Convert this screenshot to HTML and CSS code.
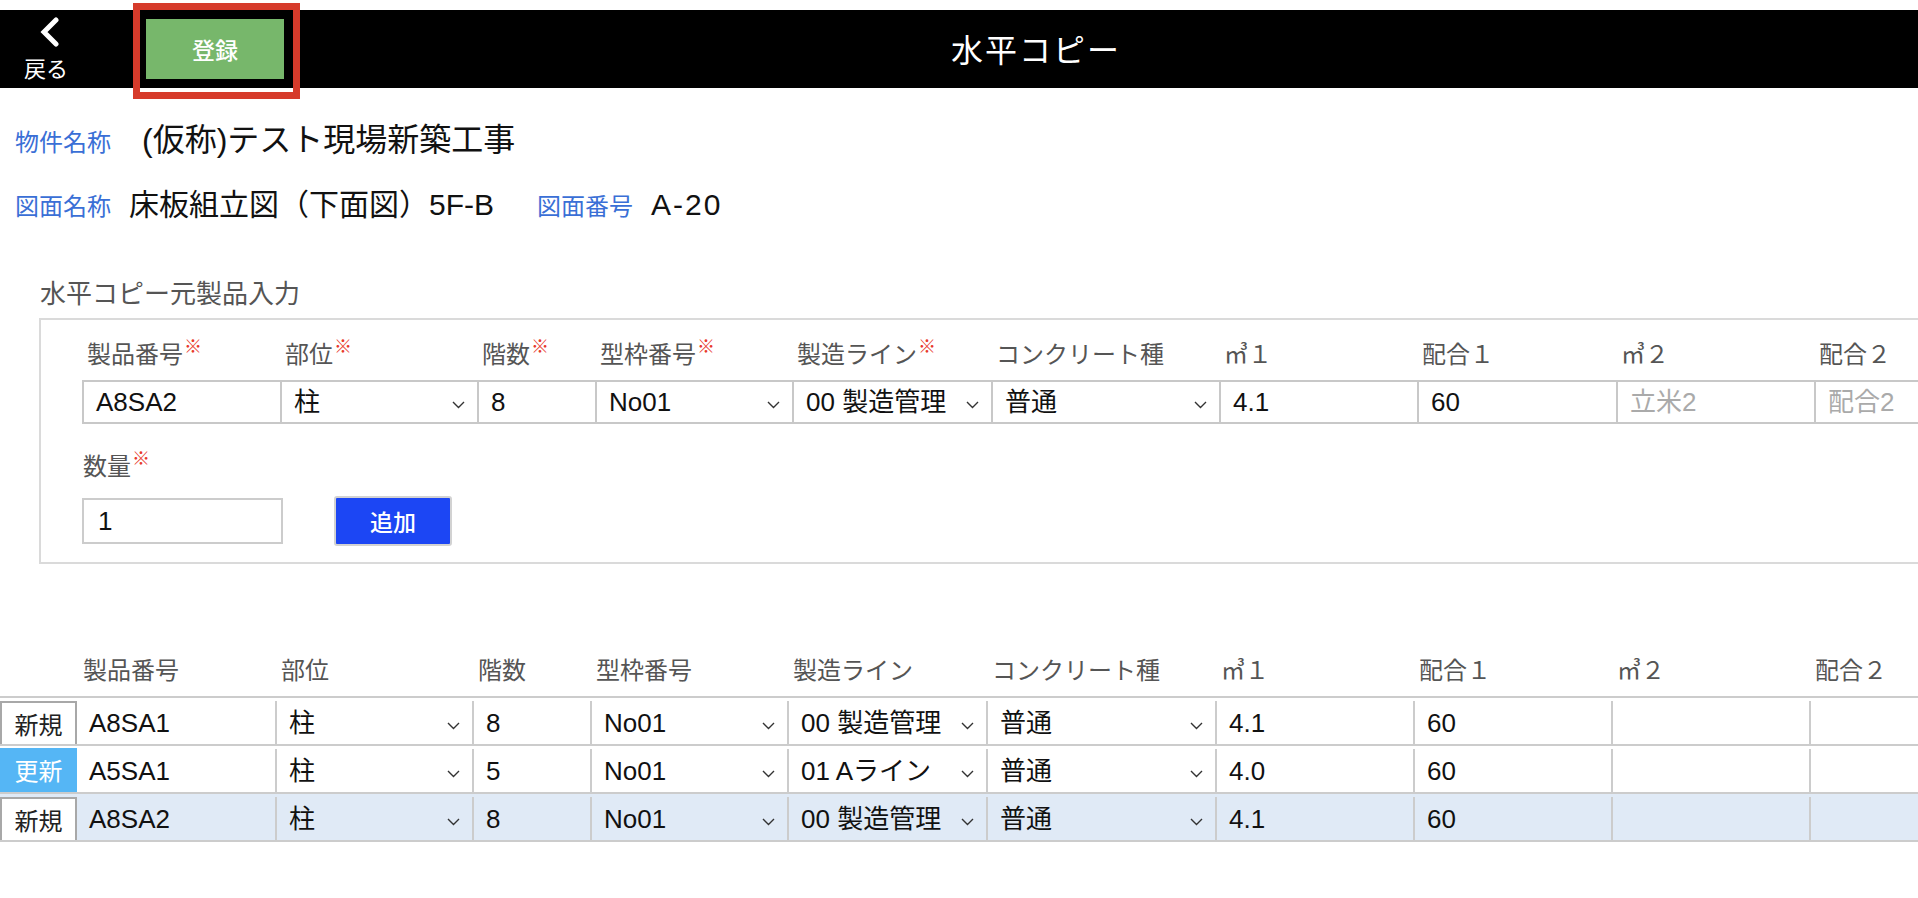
FILE: index.html
```html
<!DOCTYPE html>
<html lang="ja">
<head>
<meta charset="utf-8">
<title>水平コピー</title>
<link rel="stylesheet" href="styles.css">
</head>
<body>
<header class="topbar">
  <div class="back">
    <svg class="back-chev" viewBox="0 0 22 30"><polyline points="17,3 5,15 17,27" fill="none" stroke="#fff" stroke-width="5" stroke-linecap="round" stroke-linejoin="miter"/></svg>
    <span class="back-label">戻る</span>
  </div>
  <div class="save-wrap">
    <button class="save">登録</button>
    <span class="highlight"></span>
  </div>
  <h1 class="title">水平コピー</h1>
</header>

<section class="info">
  <div class="info-row">
    <span class="info-label">物件名称</span>
    <span class="info-value project">(仮称)テスト現場新築工事</span>
  </div>
  <div class="info-row">
    <span class="info-label">図面名称</span>
    <span class="info-value">床板組立図（下面図）5F-B</span>
    <span class="info-label after">図面番号</span>
    <span class="info-value drawing-no">A-20</span>
  </div>
</section>

<section class="source">
  <h2 class="source-title">水平コピー元製品入力</h2>
  <div class="source-box">
    <div class="cols head-row">
      <span class="head-cell">製品番号<span class="req">※</span></span>
      <span class="head-cell">部位<span class="req">※</span></span>
      <span class="head-cell">階数<span class="req">※</span></span>
      <span class="head-cell">型枠番号<span class="req">※</span></span>
      <span class="head-cell">製造ライン<span class="req">※</span></span>
      <span class="head-cell">コンクリート種</span>
      <span class="head-cell">㎥１</span>
      <span class="head-cell">配合１</span>
      <span class="head-cell">㎥２</span>
      <span class="head-cell">配合２</span>
    </div>
    <div class="cols field-row">
      <div class="field">A8SA2</div>
      <div class="field">柱<svg class="chev" viewBox="0 0 13 8"><path d="M1 1L6.5 6.5L12 1" fill="none" stroke="#333" stroke-width="1.4"/></svg></div>
      <div class="field">8</div>
      <div class="field">No01<svg class="chev" viewBox="0 0 13 8"><path d="M1 1L6.5 6.5L12 1" fill="none" stroke="#333" stroke-width="1.4"/></svg></div>
      <div class="field">00 製造管理<svg class="chev" viewBox="0 0 13 8"><path d="M1 1L6.5 6.5L12 1" fill="none" stroke="#333" stroke-width="1.4"/></svg></div>
      <div class="field">普通<svg class="chev" viewBox="0 0 13 8"><path d="M1 1L6.5 6.5L12 1" fill="none" stroke="#333" stroke-width="1.4"/></svg></div>
      <div class="field">4.1</div>
      <div class="field">60</div>
      <div class="field placeholder">立米2</div>
      <div class="field placeholder">配合2</div>
    </div>
    <div class="qty-label">数量<span class="req">※</span></div>
    <div class="qty-row">
      <div class="qty-input">1</div>
      <button class="add-btn">追加</button>
    </div>
  </div>
</section>

<section class="list">
  <div class="list-cols list-head">
    <span></span>
    <span>製品番号</span>
    <span>部位</span>
    <span>階数</span>
    <span>型枠番号</span>
    <span>製造ライン</span>
    <span>コンクリート種</span>
    <span>㎥１</span>
    <span>配合１</span>
    <span>㎥２</span>
    <span>配合２</span>
  </div>
  <div class="list-body">
    <div class="list-cols row">
      <div class="status">新規</div>
      <div class="cell first">A8SA1</div>
      <div class="cell">柱<svg class="chev" viewBox="0 0 13 8"><path d="M1 1L6.5 6.5L12 1" fill="none" stroke="#333" stroke-width="1.4"/></svg></div>
      <div class="cell">8</div>
      <div class="cell">No01<svg class="chev" viewBox="0 0 13 8"><path d="M1 1L6.5 6.5L12 1" fill="none" stroke="#333" stroke-width="1.4"/></svg></div>
      <div class="cell">00 製造管理<svg class="chev" viewBox="0 0 13 8"><path d="M1 1L6.5 6.5L12 1" fill="none" stroke="#333" stroke-width="1.4"/></svg></div>
      <div class="cell">普通<svg class="chev" viewBox="0 0 13 8"><path d="M1 1L6.5 6.5L12 1" fill="none" stroke="#333" stroke-width="1.4"/></svg></div>
      <div class="cell">4.1</div>
      <div class="cell">60</div>
      <div class="cell"></div>
      <div class="cell"></div>
    </div>
    <div class="list-cols row">
      <div class="status update">更新</div>
      <div class="cell first">A5SA1</div>
      <div class="cell">柱<svg class="chev" viewBox="0 0 13 8"><path d="M1 1L6.5 6.5L12 1" fill="none" stroke="#333" stroke-width="1.4"/></svg></div>
      <div class="cell">5</div>
      <div class="cell">No01<svg class="chev" viewBox="0 0 13 8"><path d="M1 1L6.5 6.5L12 1" fill="none" stroke="#333" stroke-width="1.4"/></svg></div>
      <div class="cell">01 Aライン<svg class="chev" viewBox="0 0 13 8"><path d="M1 1L6.5 6.5L12 1" fill="none" stroke="#333" stroke-width="1.4"/></svg></div>
      <div class="cell">普通<svg class="chev" viewBox="0 0 13 8"><path d="M1 1L6.5 6.5L12 1" fill="none" stroke="#333" stroke-width="1.4"/></svg></div>
      <div class="cell">4.0</div>
      <div class="cell">60</div>
      <div class="cell"></div>
      <div class="cell"></div>
    </div>
    <div class="list-cols row sel">
      <div class="status">新規</div>
      <div class="cell first">A8SA2</div>
      <div class="cell">柱<svg class="chev" viewBox="0 0 13 8"><path d="M1 1L6.5 6.5L12 1" fill="none" stroke="#333" stroke-width="1.4"/></svg></div>
      <div class="cell">8</div>
      <div class="cell">No01<svg class="chev" viewBox="0 0 13 8"><path d="M1 1L6.5 6.5L12 1" fill="none" stroke="#333" stroke-width="1.4"/></svg></div>
      <div class="cell">00 製造管理<svg class="chev" viewBox="0 0 13 8"><path d="M1 1L6.5 6.5L12 1" fill="none" stroke="#333" stroke-width="1.4"/></svg></div>
      <div class="cell">普通<svg class="chev" viewBox="0 0 13 8"><path d="M1 1L6.5 6.5L12 1" fill="none" stroke="#333" stroke-width="1.4"/></svg></div>
      <div class="cell">4.1</div>
      <div class="cell">60</div>
      <div class="cell"></div>
      <div class="cell"></div>
    </div>
  </div>
</section>
</body>
</html>
```

FILE: styles.css
```css
* { box-sizing: border-box; }

html, body { margin: 0; padding: 0; }

body {
  width: 1918px;
  height: 898px;
  padding-top: 10px;
  overflow: hidden;
  background: #fff;
  color: #111;
  font-family: "Liberation Sans", "Noto Sans CJK JP", sans-serif;
}

/* ---------- top bar ---------- */
.topbar {
  display: flex;
  align-items: center;
  height: 78px;
  background: #000;
  color: #fff;
}

.back {
  width: 92px;
  height: 100%;
  display: flex;
  flex-direction: column;
  align-items: center;
  justify-content: center;
  gap: 8px;
  padding-bottom: 2px;
}

.back-chev {
  width: 22px;
  height: 30px;
  margin-left: 8px;
}

.back-label {
  font-family: "Noto Sans CJK JP", sans-serif;
  font-size: 22px;
  line-height: 24px;
}

.save-wrap {
  position: relative;
  margin-left: 54px;
}

.save {
  display: block;
  width: 138px;
  height: 60px;
  padding: 0;
  border: 0;
  background: #77b76b;
  color: #fff;
  font-family: "Noto Sans CJK JP", sans-serif;
  font-weight: 500;
  font-size: 23px;
  line-height: 60px;
}

.highlight {
  position: absolute;
  left: -13px;
  right: -16px;
  top: -16px;
  bottom: -20px;
  border: 7px solid #d63b2b;
  pointer-events: none;
}

.title {
  flex: 1;
  margin: 0;
  padding-right: 130px;
  padding-bottom: 3px;
  text-align: center;
  font-family: "Noto Sans CJK JP", sans-serif;
  font-weight: 400;
  font-size: 32px;
  letter-spacing: 2px;
}

/* ---------- info ---------- */
.info {
  padding-left: 15px;
}

.info-row {
  display: flex;
  align-items: baseline;
  height: 40px;
}

.info-row:first-child { margin-top: 26px; }
.info-row + .info-row { margin-top: 26px; }

.info-label {
  color: #3a6fd6;
  font-size: 24px;
  margin-right: 18px;
}

.info-label.after { margin-left: 43px; }

.info-value {
  font-size: 30px;
  color: #111;
}

.info-value.project {
  margin-left: 13px;
  font-size: 32px;
}

.info-value.drawing-no { letter-spacing: 2px; }

/* ---------- source form ---------- */
.source {
  margin: 57px 0 0 39px;
}

.source-title {
  margin: 0 0 7px 1px;
  font-size: 26px;
  line-height: 34px;
  font-weight: 400;
  color: #555;
}

.source-box {
  width: 2040px;
  border: 2px solid #dadada;
  padding: 20px 0 16px 41px;
}

.cols {
  display: grid;
  grid-template-columns: 198px 197px 118px 197px 199px 228px 198px 199px 198px 198px;
}

.head-row {
  height: 30px;
}

.head-cell {
  padding-left: 5px;
  font-size: 24px;
  line-height: 30px;
  color: #555;
  white-space: nowrap;
}

.req {
  position: relative;
  top: -10px;
  margin-left: 1px;
  color: #e8392c;
  font-size: 18px;
}

.field-row {
  margin-top: 10px;
  height: 44px;
  border-top: 2px solid #c8c8c8;
  border-bottom: 2px solid #c8c8c8;
}

.field {
  display: flex;
  align-items: center;
  padding: 0 12px;
  border-left: 2px solid #c8c8c8;
  font-size: 26px;
  line-height: 30px;
  white-space: nowrap;
}

.field:last-child { border-right: 2px solid #c8c8c8; }

.placeholder { color: #aaa; }

.chev {
  flex: none;
  width: 13px;
  height: 8px;
  margin-left: auto;
  margin-top: 6px;
}

.qty-label {
  margin-top: 28px;
  padding-left: 1px;
  height: 30px;
  line-height: 30px;
  font-size: 24px;
  color: #555;
}

.qty-row {
  display: flex;
  align-items: center;
  height: 50px;
  margin-top: 14px;
}

.qty-input {
  display: flex;
  align-items: center;
  width: 201px;
  height: 46px;
  padding-left: 14px;
  border: 2px solid #cccccc;
  font-size: 26px;
  line-height: 30px;
}

.add-btn {
  width: 118px;
  height: 50px;
  margin-left: 51px;
  padding: 0;
  border: 2px solid #d2d2d2;
  border-radius: 3px;
  background: #1c46f4;
  color: #fff;
  font-family: "Noto Sans CJK JP", sans-serif;
  font-weight: 500;
  font-size: 23px;
}

/* ---------- list ---------- */
.list {
  margin-top: 92px;
}

.list-cols {
  display: grid;
  grid-template-columns: 77px 198px 197px 118px 197px 199px 229px 198px 198px 198px 198px;
}

.list-head {
  height: 30px;
}

.list-head span {
  padding-left: 6px;
  font-size: 24px;
  line-height: 30px;
  color: #555;
  white-space: nowrap;
}

.list-body {
  width: 2050px;
  margin-top: 10px;
  border-top: 2px solid #cccccc;
}

.row {
  height: 48px;
  padding-top: 3px;
  border-bottom: 2px solid #cccccc;
}

.row.sel { background: #e0eaf6; }

.cell {
  display: flex;
  align-items: center;
  padding: 0 12px;
  border-left: 2px solid #cccccc;
  font-size: 26px;
  line-height: 30px;
  white-space: nowrap;
}

.cell.first { border-left: 0; }

.status {
  display: flex;
  align-items: center;
  justify-content: center;
  border: 2px solid #a8a8a8;
  border-bottom: 0;
  background: #fff;
  color: #222;
  font-family: "Noto Sans CJK JP", sans-serif;
  font-size: 24px;
  line-height: 30px;
}

.status.update {
  margin-top: -1px;
  border: 0;
  background: #55b6f5;
  color: #fff;
}
```
